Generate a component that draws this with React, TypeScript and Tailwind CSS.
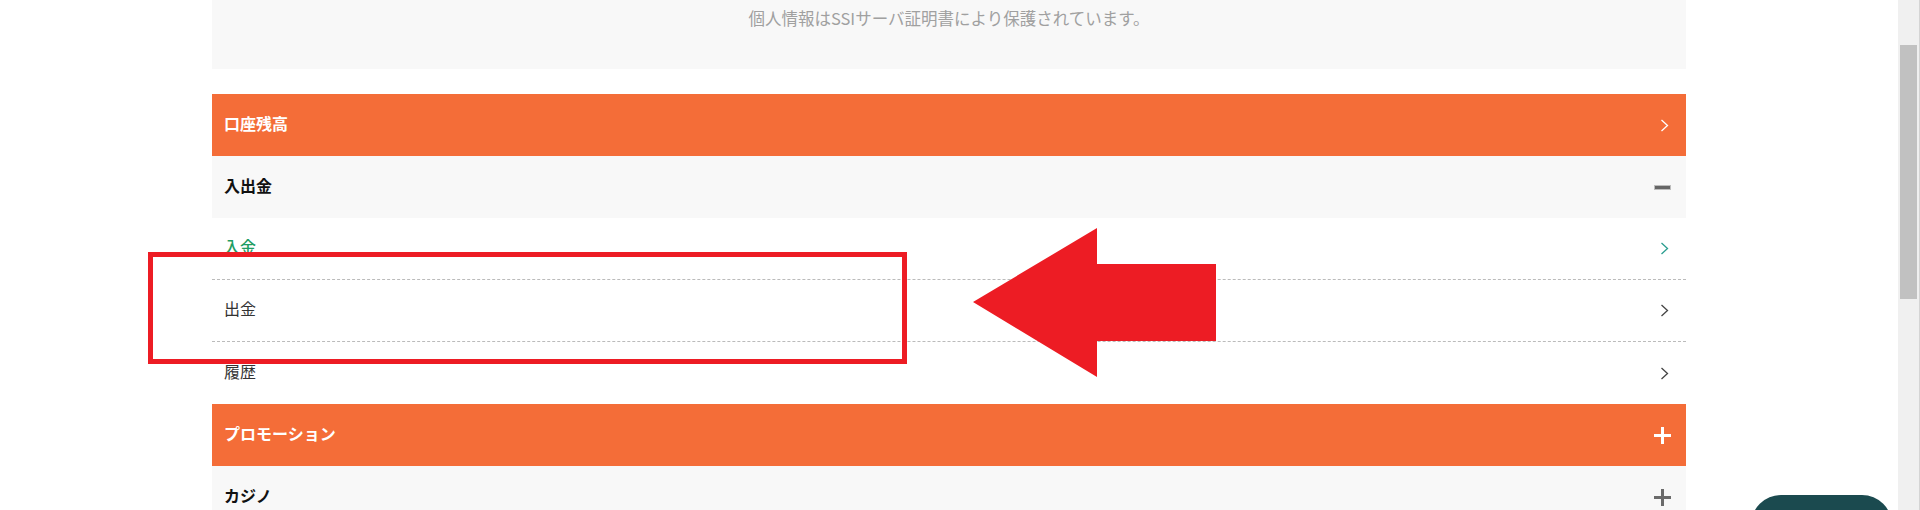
import React from "react";

type Row =
  | { kind: "section"; label: string; icon: "chevron" | "plus" }
  | { kind: "group"; label: string; icon: "minus" | "plus" }
  | { kind: "item"; label: string; active?: boolean; last?: boolean };

const rows: Row[] = [
  { kind: "section", label: "口座残高", icon: "chevron" },
  { kind: "group", label: "入出金", icon: "minus" },
  { kind: "item", label: "入金", active: true },
  { kind: "item", label: "出金" },
  { kind: "item", label: "履歴", last: true },
  { kind: "section", label: "プロモーション", icon: "plus" },
  { kind: "group", label: "カジノ", icon: "plus" },
];

function Chevron({ color }: { color: string }) {
  return (
    <svg className="ml-[4px]" width="9" height="13" viewBox="0 0 9 13" fill="none">
      <polyline points="1.5,1 7.5,6.5 1.5,12" stroke={color} strokeWidth="1.3" />
    </svg>
  );
}

function Plus({ color }: { color: string }) {
  return (
    <svg width="17" height="17" viewBox="0 0 17 17">
      <rect x="0" y="7" width="17" height="3" fill={color} />
      <rect x="7" y="0" width="3" height="17" fill={color} />
    </svg>
  );
}

function RowView({ row }: { row: Row }) {
  if (row.kind === "section") {
    return (
      <div className="flex h-[62px] items-center justify-between bg-[#f46d38] pl-[12px] pr-[15px]">
        <span className="mb-[5px] text-[16px] font-bold text-white">{row.label}</span>
        <span className="flex w-[17px] justify-center">
          {row.icon === "chevron" ? <Chevron color="#ffffff" /> : <Plus color="#ffffff" />}
        </span>
      </div>
    );
  }
  if (row.kind === "group") {
    return (
      <div className="flex h-[62px] items-center justify-between bg-[#f8f8f8] pl-[12px] pr-[15px]">
        <span className="mb-[5px] text-[16px] font-bold text-[#111]">{row.label}</span>
        <span className="flex w-[17px] justify-center">
          {row.icon === "minus" ? (
            <span className="block h-[5px] w-[17px] border border-[#bdbdbd] bg-[#666]" />
          ) : (
            <Plus color="#6b6b6b" />
          )}
        </span>
      </div>
    );
  }
  return (
    <div
      className={
        row.last
          ? "flex h-[62px] items-center justify-between bg-white pl-[12px] pr-[15px]"
          : "flex h-[62px] items-center justify-between border-b border-dashed border-[#bbbbbb] bg-white pl-[12px] pr-[15px]"
      }
    >
      <span
        className={
          row.active
            ? "mb-[5px] text-[16px] font-medium text-[#1f9d63]"
            : "mb-[5px] text-[16px] text-[#333]"
        }
      >
        {row.label}
      </span>
      <span className="flex w-[17px] justify-center">
        <Chevron color={row.active ? "#2a9d8f" : "#444"} />
      </span>
    </div>
  );
}

export default function App() {
  return (
    <div
      className="relative flex h-[510px] w-[1920px] overflow-hidden bg-white"
      style={{ fontFamily: '"Noto Sans CJK JP", "Noto Sans", sans-serif' }}
    >
      <div className="w-[1898px]">
        <div className="mx-auto w-[1474px]">
          <div className="h-[69px] bg-[#f8f8f8] pt-[6px] text-center text-[16.5px] leading-6 text-[#a0a0a0]">
            個人情報はSSIサーバ証明書により保護されています。
          </div>
          <div className="mt-[25px]">
            {rows.map((row) => (
              <RowView key={row.label} row={row} />
            ))}
          </div>
        </div>
      </div>

      {/* scrollbar */}
      <div className="relative w-[22px] border-r border-[#d4d4d4] bg-[#f0f0f0]">
        <div className="absolute left-[2px] top-[45px] h-[254px] w-[17px] bg-[#c1c1c1]" />
      </div>

      {/* chat button */}
      <div className="absolute left-[1751px] top-[495px] h-[60px] w-[141px] rounded-[30px] bg-[#1b4a4f]" />

      {/* annotation */}
      <div className="absolute left-[148px] top-[252px] h-[112px] w-[759px] border-[5px] border-[#ed1c24]" />
      <svg
        className="absolute left-[970px] top-[225px]"
        width="250"
        height="156"
        viewBox="970 225 250 156"
      >
        <polygon
          points="973,302 1097,228 1097,264 1216,264 1216,341 1097,341 1097,377"
          fill="#ed1c24"
        />
      </svg>
    </div>
  );
}
